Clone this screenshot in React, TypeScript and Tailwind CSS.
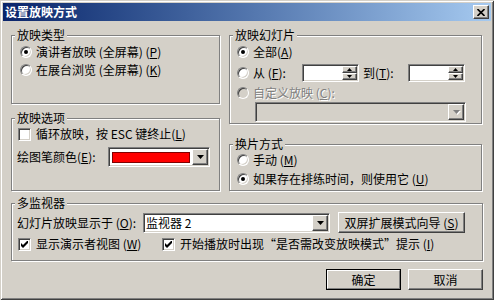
import type { ReactNode } from "react";

const sunken =
  "border border-t-[#808080] border-l-[#808080] border-r-white border-b-white shadow-[inset_1px_1px_0_#404040,inset_-1px_-1px_0_#d4d0c8]";
const raised =
  "border border-t-white border-l-white border-r-[#404040] border-b-[#404040] shadow-[inset_-1px_-1px_0_#808080] bg-[#d4d0c8]";

const Key = ({ k }: { k: string }) => (
  <>
    (<u>{k}</u>)
  </>
);

const Radio = ({ checked, disabled }: { checked?: boolean; disabled?: boolean }) => (
  <span
    className={`flex h-[12px] w-[12px] shrink-0 items-center justify-center rounded-full ${sunken} ${
      disabled ? "bg-[#d4d0c8]" : "bg-white"
    }`}
  >
    {checked && <span className="h-[4px] w-[4px] rounded-full bg-black" />}
  </span>
);

const Check = ({ checked }: { checked?: boolean }) => (
  <span className={`flex h-[13px] w-[13px] shrink-0 items-center justify-center bg-white ${sunken}`}>
    {checked && (
      <svg width="7" height="7" viewBox="0 0 7 7">
        <path d="M0 2 L2 4 L6 0 L7 0 L7 2 L2 7 L0 5 Z" fill="#000" />
      </svg>
    )}
  </span>
);

const Arrow = ({ disabled }: { disabled?: boolean }) => (
  <span className={`flex w-[16px] shrink-0 items-center justify-center ${raised}`}>
    <svg width="7" height="4" viewBox="0 0 7 4" className={disabled ? "drop-shadow-[1px_1px_0_#fff]" : ""}>
      <path d="M0 0 H7 L3.5 4 Z" fill={disabled ? "#808080" : "#000"} />
    </svg>
  </span>
);

const Spin = () => (
  <div className={`flex h-[18px] w-[57px] shrink-0 bg-white p-[1px] ${sunken}`}>
    <div className="flex-1" />
    <div className="flex w-[15px] flex-col">
      <span className={`flex h-[7px] items-center justify-center ${raised}`}>
        <svg width="5" height="3" viewBox="0 0 5 3">
          <path d="M2.5 0 L5 3 H0 Z" fill="#000" />
        </svg>
      </span>
      <span className={`flex h-[7px] items-center justify-center ${raised}`}>
        <svg width="5" height="3" viewBox="0 0 5 3">
          <path d="M0 0 H5 L2.5 3 Z" fill="#000" />
        </svg>
      </span>
    </div>
  </div>
);

const Group = ({ title, className, children }: { title: string; className: string; children: ReactNode }) => (
  <div className={`flex flex-col border border-[#808080] shadow-[inset_1px_1px_0_#fff,1px_1px_0_#fff] ${className}`}>
    <span className="-mt-[8px] ml-[3px] self-start bg-[#d4d0c8] px-[2px] leading-[14px]">{title}</span>
    {children}
  </div>
);

export default function App() {
  return (
    <div className="flex h-[300px] w-[494px] flex-col bg-[#d4d0c8] p-[3px] font-['Noto_Sans_CJK_SC',sans-serif] text-[12px] leading-[16px] text-black shadow-[inset_1px_1px_0_#d4d0c8,inset_-1px_-1px_0_#404040,inset_2px_2px_0_#fff,inset_-2px_-2px_0_#808080]">
      <div className="flex h-[18px] shrink-0 items-center justify-between bg-linear-to-r from-[#0a246a] to-[#a6caf0] pl-[2px] pr-[2px]">
        <span className="font-bold text-white">设置放映方式</span>
        <span className={`flex h-[14px] w-[16px] items-center justify-center ${raised}`}>
          <svg width="8" height="7" viewBox="0 0 8 7">
            <path d="M0.5 0 L7.5 7 M7.5 0 L0.5 7" stroke="#000" strokeWidth="1.6" />
          </svg>
        </span>
      </div>

      <div className="flex flex-1 flex-col px-[8px]">
        <div className="mt-[14px] flex gap-[9px]">
          <div className="flex w-[209px] flex-col">
            <Group title="放映类型" className="h-[69px]">
              <div className="ml-[8px] mt-[2px] flex h-[16px] items-center gap-[4px]">
                <Radio checked />
                <span>演讲者放映 (全屏幕) <Key k="P" /></span>
              </div>
              <div className="ml-[8px] mt-[2px] flex h-[16px] items-center gap-[4px]">
                <Radio />
                <span>在展台浏览 (全屏幕) <Key k="K" /></span>
              </div>
            </Group>
            <Group title="放映选项" className="mt-[14px] h-[73px]">
              <div className="ml-[6px] mt-[1px] flex h-[16px] items-center gap-[5px]">
                <Check />
                <span>循环放映，按 ESC 键终止<Key k="L" /></span>
              </div>
              <div className="ml-[5px] mt-[5px] flex h-[20px] items-center">
                <span className="w-[91px]">绘图笔颜色<Key k="E" />:</span>
                <div className={`flex h-[20px] w-[102px] bg-white p-[1px] ${sunken}`}>
                  <div className="flex flex-1 items-center px-[2px]">
                    <span className="h-[11px] w-full border border-[#800000] bg-[#ff0000]" />
                  </div>
                  <Arrow />
                </div>
              </div>
            </Group>
          </div>

          <div className="flex w-[253px] flex-col">
            <Group title="放映幻灯片" className="h-[89px]">
              <div className="ml-[7px] mt-[2px] flex h-[16px] items-center gap-[4px]">
                <Radio checked />
                <span>全部<Key k="A" /></span>
              </div>
              <div className="ml-[7px] mt-[4px] flex h-[18px] items-center">
                <Radio />
                <span className="ml-[4px] w-[49px]">从 <Key k="F" />:</span>
                <Spin />
                <span className="ml-[4px] w-[45px]">到<Key k="T" />:</span>
                <Spin />
              </div>
              <div className="ml-[7px] mt-[3px] flex h-[16px] items-center gap-[4px]">
                <Radio disabled />
                <span className="text-[#808080] [text-shadow:1px_1px_0_#fff]">自定义放映 <Key k="C" />:</span>
              </div>
              <div className={`ml-[25px] mt-[1px] flex h-[20px] w-[211px] bg-[#d4d0c8] p-[1px] ${sunken}`}>
                <div className="flex-1" />
                <Arrow disabled />
              </div>
            </Group>
            <Group title="换片方式" className="mt-[20px] h-[47px]">
              <div className="ml-[7px] mt-[1px] flex h-[16px] items-center gap-[4px]">
                <Radio />
                <span>手动 <Key k="M" /></span>
              </div>
              <div className="ml-[7px] mt-[3px] flex h-[16px] items-center gap-[4px]">
                <Radio checked />
                <span>如果存在排练时间，则使用它 <Key k="U" /></span>
              </div>
            </Group>
          </div>
        </div>

        <Group title="多监视器" className="mt-[12px] h-[58px]">
          <div className="ml-[5px] mt-[2px] flex h-[21px] items-center">
            <span className="w-[126px]">幻灯片放映显示于 <Key k="O" />:</span>
            <div className={`flex h-[20px] w-[187px] bg-white p-[1px] ${sunken}`}>
              <span className="flex-1 pl-[1px] leading-[16px]">监视器 2</span>
              <Arrow />
            </div>
            <button className={`ml-[8px] flex h-[21px] w-[127px] items-center justify-center ${raised}`}>
              双屏扩展模式向导 <Key k="S" />
            </button>
          </div>
          <div className="ml-[6px] mt-[3px] flex h-[16px] items-center">
            <div className="flex w-[144px] items-center gap-[5px]">
              <Check checked />
              <span>显示演示者视图 <Key k="W" /></span>
            </div>
            <div className="flex items-center gap-[5px]">
              <Check checked />
              <span>开始播放时出现“是否需改变放映模式”提示 <Key k="I" /></span>
            </div>
          </div>
        </Group>

        <div className="mt-[8px] flex justify-end gap-[7px]">
          <div className="h-[21px] w-[75px] border border-black">
            <button className="flex h-full w-full items-center justify-center border border-t-white border-l-white border-r-[#808080] border-b-[#808080] bg-[#d4d0c8]">
              确定
            </button>
          </div>
          <button className={`flex h-[21px] w-[75px] items-center justify-center ${raised}`}>取消</button>
        </div>
      </div>
    </div>
  );
}
